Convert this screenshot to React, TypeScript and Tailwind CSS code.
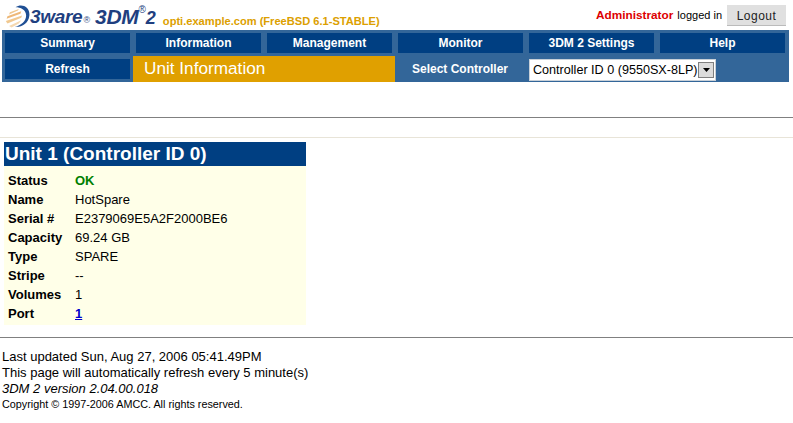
import type React from "react"

const topMenu = ["Summary", "Information", "Management", "Monitor", "3DM 2 Settings", "Help"]

const unitRows: { label: string; value: React.ReactNode }[] = [
  { label: "Status", value: <span className="font-bold text-[#008000]">OK</span> },
  { label: "Name", value: "HotSpare" },
  { label: "Serial #", value: "E2379069E5A2F2000BE6" },
  { label: "Capacity", value: "69.24 GB" },
  { label: "Type", value: "SPARE" },
  { label: "Stripe", value: "--" },
  { label: "Volumes", value: "1" },
  { label: "Port", value: <a className="font-bold text-[#0000cc] underline">1</a> },
]

const Logo = () => (
  <svg width="26" height="26" viewBox="0 0 32 32" className="shrink-0">
    <path d="M13 4 C20 -1 31 3 30 14 C29 24 20 29 12 28 C20 26 26 21 26 14 C26 7 19 4 13 4 Z" fill="#1f4f94" />
    <path d="M6 10 L17 6 L16 8 L5 13 Z" fill="#f0c890" />
    <path d="M3 15 L20 9 L19 12 L2 18 Z" fill="#eeb878" />
    <path d="M1 21 L21 14 L20 17 L3 24 Z" fill="#f0c890" />
    <path d="M5 27 L20 20 L17 24 L8 29 Z" fill="#f5d8b0" />
  </svg>
)

export default function App() {
  return (
    <div className="h-[423px] w-[793px] overflow-hidden bg-white font-['Liberation_Sans',Arial,sans-serif] text-[13px] text-black">
      <header className="flex h-[30px] items-end justify-between">
        <div className="flex items-end pl-[5px]">
          <Logo />
          <span className="mb-[1px] ml-[-1px] text-[19px] leading-[24px] font-bold tracking-[-0.3px] text-[#1f3f80] italic">
            3ware
          </span>
          <span className="mb-[5px] ml-[1px] text-[9px] leading-none text-[#1f3f80]">®</span>
          <span className="mb-[1px] ml-[5px] text-[21px] leading-[24px] font-bold tracking-[-0.3px] text-[#1f3f80] italic">
            3DM
          </span>
          <span className="mb-[15px] text-[10px] leading-none text-[#1f3f80]">®</span>
          <span className="mb-[1px] text-[18px] leading-[22px] font-bold text-[#1f3f80] italic">2</span>
          <span className="mb-[2px] ml-[7px] text-[11.1px] leading-[14px] font-bold text-[#dca000]">
            opti.example.com (FreeBSD 6.1-STABLE)
          </span>
        </div>
        <div className="mr-[7px] mb-[4px] flex items-center">
          <span className="text-[11.8px] font-bold text-[#dd0000]">Administrator</span>
          <span className="ml-[4px] text-[11px]">logged in</span>
          <button className="ml-[5px] h-[21px] w-[59px] bg-[#e0e0e0] text-[12px] tracking-[0.5px] text-[#222] shadow-[inset_0_-1px_0_#bbb]">
            Logout
          </button>
        </div>
      </header>

      <nav className="ml-[2px] h-[52px] w-[787px] bg-[#336699]">
        <div className="flex gap-[6px] px-[3px] pt-[3px]">
          {topMenu.map((item) => (
            <div
              key={item}
              className="flex h-[20px] w-[125px] items-center justify-center bg-[#003f82] text-[12px] font-bold text-white"
            >
              {item}
            </div>
          ))}
        </div>
        <div className="flex h-[29px] items-end">
          <div className="mb-[3px] ml-[3px] flex h-[20px] w-[125px] items-center justify-center bg-[#003f82] text-[12px] font-bold text-white">
            Refresh
          </div>
          <div className="ml-[3px] flex h-[26px] w-[262px] items-center bg-[#e0a000] pl-[11px] text-[17.2px] text-white">
            Unit Information
          </div>
          <div className="mb-[3px] flex h-[20px] w-[134px] items-center justify-center pr-[4px] text-[12px] font-bold text-white">
            Select Controller
          </div>
          <div className="mb-[1px] flex h-[22px] w-[187px] items-center justify-between border border-[#c8d0d8] bg-white pr-[1px] pl-[3px] text-[12.6px]">
            <span>Controller ID 0 (9550SX-8LP)</span>
            <span className="flex h-[16px] w-[16px] items-center justify-center border border-[#808080] bg-[#dcdcdc]">
              <svg width="7" height="4" viewBox="0 0 7 4">
                <path d="M0 0 H7 L3.5 4 Z" fill="#000" />
              </svg>
            </span>
          </div>
        </div>
      </nav>

      <hr className="mt-[35px] border-t border-[#808080]" />
      <hr className="mt-[19px] border-t border-[#e8e4d8]" />

      <section className="mt-[4px] ml-[4px] w-[302px] bg-[#ffffe8]">
        <h1 className="flex h-[24px] items-center bg-[#003f82] pl-[1px] text-[19px] font-bold text-white">
          Unit 1 (Controller ID 0)
        </h1>
        <div className="pt-[5px] pb-[2px] pl-[4px]">
          {unitRows.map((row) => (
            <div key={row.label} className="flex h-[19px] items-center">
              <span className="w-[67px] font-bold">{row.label}</span>
              <span>{row.value}</span>
            </div>
          ))}
        </div>
      </section>

      <hr className="mt-[12px] border-t border-[#808080]" />

      <footer className="mt-[11px] pl-[2px]">
        <div className="h-[16px] leading-[16px]">Last updated Sun, Aug 27, 2006 05:41.49PM</div>
        <div className="h-[16px] leading-[16px]">This page will automatically refresh every 5 minute(s)</div>
        <div className="h-[16px] leading-[16px] italic">3DM 2 version 2.04.00.018</div>
        <div className="h-[15px] text-[10.8px] leading-[15px]">Copyright © 1997-2006 AMCC. All rights reserved.</div>
      </footer>
    </div>
  )
}
